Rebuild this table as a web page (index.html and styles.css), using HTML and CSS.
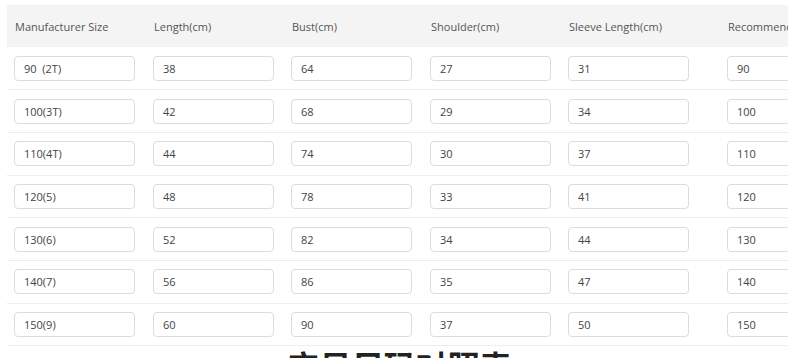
FILE: index.html
```html
<!DOCTYPE html>
<html lang="en">
<head>
<meta charset="utf-8">
<link rel="stylesheet" href="styles.css">
</head>
<body>
<div class="page">
  <div class="table-wrap">
    <table class="size-table">
      <colgroup>
        <col class="c1"><col class="c2"><col class="c3"><col class="c4"><col class="c5"><col class="c6">
      </colgroup>
      <thead>
        <tr>
          <th>Manufacturer Size</th>
          <th>Length(cm)</th>
          <th>Bust(cm)</th>
          <th>Shoulder(cm)</th>
          <th>Sleeve Length(cm)</th>
          <th>Recommended Height(cm)</th>
        </tr>
      </thead>
      <tbody>
        <tr><td><div class="field">90&nbsp;&nbsp;(2T)</div></td><td><div class="field">38</div></td><td><div class="field">64</div></td><td><div class="field">27</div></td><td><div class="field">31</div></td><td><div class="field">90</div></td></tr>
        <tr><td><div class="field">100(3T)</div></td><td><div class="field">42</div></td><td><div class="field">68</div></td><td><div class="field">29</div></td><td><div class="field">34</div></td><td><div class="field">100</div></td></tr>
        <tr><td><div class="field">110(4T)</div></td><td><div class="field">44</div></td><td><div class="field">74</div></td><td><div class="field">30</div></td><td><div class="field">37</div></td><td><div class="field">110</div></td></tr>
        <tr><td><div class="field">120(5)</div></td><td><div class="field">48</div></td><td><div class="field">78</div></td><td><div class="field">33</div></td><td><div class="field">41</div></td><td><div class="field">120</div></td></tr>
        <tr><td><div class="field">130(6)</div></td><td><div class="field">52</div></td><td><div class="field">82</div></td><td><div class="field">34</div></td><td><div class="field">44</div></td><td><div class="field">130</div></td></tr>
        <tr><td><div class="field">140(7)</div></td><td><div class="field">56</div></td><td><div class="field">86</div></td><td><div class="field">35</div></td><td><div class="field">47</div></td><td><div class="field">140</div></td></tr>
        <tr><td><div class="field">150(9)</div></td><td><div class="field">60</div></td><td><div class="field">90</div></td><td><div class="field">37</div></td><td><div class="field">50</div></td><td><div class="field">150</div></td></tr>
      </tbody>
    </table>
  </div>
  <h2 class="title">宝贝尺码对照表</h2>
</div>
</body>
</html>
```
FILE: styles.css
```css
* { box-sizing: border-box; }
html, body { margin: 0; padding: 0; background: #fff; }
body {
  font-family: "Open Sans", "Noto Sans", "Noto Sans CJK SC", sans-serif;
  width: 800px;
  height: 358px;
  overflow: hidden;
}
.page {
  padding: 5px 0 0 7px;
}
.table-wrap {
  width: 781px;
  overflow: hidden;
}
.size-table {
  border-collapse: collapse;
  table-layout: fixed;
  width: 900px;
}
.c1 { width: 139px; }
.c2 { width: 138px; }
.c3 { width: 139px; }
.c4 { width: 138px; }
.c5 { width: 159px; }
.c6 { width: 187px; }
.size-table th {
  background: #f4f4f5;
  height: 42px;
  padding: 0 0 0 8px;
  text-align: left;
  font-weight: 400;
  font-size: 11px;
  color: #555;
  white-space: nowrap;
  overflow: hidden;
}
.size-table td {
  height: 42.7px;
  padding: 0 0 0 7px;
  border-bottom: 1px solid #ededed;
  vertical-align: middle;
}
.field {
  width: 121px;
  height: 25px;
  border: 1px solid #dcdcdc;
  border-radius: 4px;
  padding: 0 0 0 9px;
  font-size: 11px;
  line-height: 23px;
  color: #444;
  background: #fff;
  white-space: nowrap;
}
.title {
  margin: 4px 0 0 0;
  padding-right: 8px;
  text-align: center;
  font-family: "Noto Sans CJK SC", sans-serif;
  font-size: 32px;
  font-weight: 700;
  color: #222;
  line-height: 30px;
}
```
